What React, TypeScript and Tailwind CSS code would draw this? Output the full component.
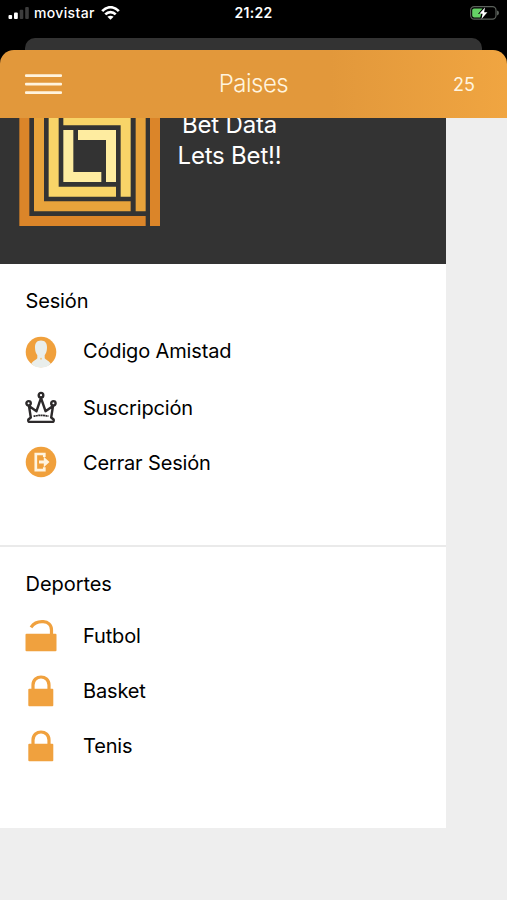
import type { ReactNode } from "react";

function Signal() {
  return (
    <svg className="block h-3 w-[22px]" viewBox="0 0 22 12">
      <rect x="0.5" y="8" width="3.6" height="4" rx="1" fill="#fff" />
      <rect x="6" y="5.5" width="3.8" height="6.5" rx="1" fill="#fff" />
      <rect x="11.7" y="2.7" width="3.6" height="9.3" rx="1" fill="#3c3c3c" />
      <rect x="17.2" y="0" width="3.6" height="12" rx="1" fill="#3c3c3c" />
    </svg>
  );
}

function Wifi() {
  return (
    <svg className="block h-[14px] w-[19px]" viewBox="0 0 19 14" fill="none" stroke="#fff" strokeWidth="2.7">
      <path d="M1.2 5.2C6-.1 13-.1 17.8 5.2" />
      <path d="M4.3 8.4c3-3.1 7.4-3.1 10.4 0" />
      <path d="M6.4 10.8q3.100-2.300 6.200 0l-3.100 3z" fill="#fff" stroke="none" />
    </svg>
  );
}

function Battery() {
  return (
    <svg className="block h-[14px] w-[30px]" viewBox="0 0 30 14">
      <rect x="1.6" y="0.6" width="25.4" height="12.6" rx="3.6" fill="none" stroke="#5b615b" strokeWidth="1.2" />
      <path d="M28 4.6q2 .5 2 2.400t-2 2.400z" fill="#5b615b" />
      <path d="M5 2.400h8.500L9 8h3.200l-1 3.400H5a1.800 1.800 0 0 1-1.800-1.800V4.200A1.800 1.800 0 0 1 5 2.400z" fill="#65d366" />
      <path d="M16 1.500 10.300 7.800h3.300l-1.100 5.100 5.900-6.600h-3.300z" fill="#fff" />
    </svg>
  );
}

function MenuBars() {
  return (
    <svg className="block h-5 w-[37px]" viewBox="0 0 37 20" fill="currentColor">
      <rect width="37" height="2.800" y="0.200" rx="1" />
      <rect width="37" height="2.800" y="8.700" rx="1" />
      <rect width="37" height="2.800" y="17.200" rx="1" />
    </svg>
  );
}

function Logo() {
  return (
    <svg className="block h-[112px] w-[170px] shrink-0" viewBox="0 24 510 336">
      <path d="M58 24h30v294h349v30H58zM450 24h30v324h-30z" fill="#db8529" />
      <path d="M102 24h30v250h260v30H102zM407 24h30v280h-30z" fill="#e8a33b" />
      <path d="M146 24h30v206h172v30H146zM190 24h202v236h-30V46H190z" fill="#f8d468" />
      <path d="M190 60h30v126h84v30H190zM234 60h114v156h-30V90h-84z" fill="#feeca0" />
    </svg>
  );
}

function Person() {
  return (
    <svg className="block size-8" viewBox="0 0 32 32">
      <circle cx="16" cy="16" r="15.300" fill="#f0a03c" />
      <path d="M16 4.600c4.200 0 6.200 2.800 6 7.200-.1 3.500-1 5.700-2.300 7.400v3c.9 1.500 3.700 2.200 6 5.200C23.500 30.400 20 31.400 16 31.400S8.500 30.400 6.300 27.400c2.300-3 5.100-3.700 6-5.200v-3C11 17.500 10.100 15.300 10 11.800c-.2-4.400 1.800-7.200 6-7.200z" fill="#e9eeec" />
      <circle cx="16" cy="22.700" r="1" fill="#efc98e" />
    </svg>
  );
}

function Crown() {
  return (
    <svg className="block size-8" viewBox="0 0 32 32" fill="none" stroke="#2d2a2b" strokeWidth="2.400" strokeLinejoin="round">
      <path d="M5.800 26.500 4 15l7.500 5.200L16 7l4.500 13.200L28 15l-1.800 11.500 2.400 2c.5 1.500-.2 2.500-1.500 2.500H4.900c-1.300 0-2-1-1.500-2.500z" fill="#fff" />
      <path d="M8.500 25.300q7.500-2 15 0" strokeWidth="1.700" strokeDasharray="2 .4" />
      <circle cx="3.600" cy="12.300" r="2.200" fill="#fff" />
      <circle cx="16" cy="4.200" r="2.300" fill="#fff" />
      <circle cx="28.400" cy="12.300" r="2.200" fill="#fff" />
    </svg>
  );
}

function Exit() {
  return (
    <svg className="block size-8" viewBox="0 0 32 32">
      <circle cx="16" cy="16" r="15.300" fill="#f0a03c" />
      <path d="M19.300 11V8H10.800v16.200h8.500v-3" fill="none" stroke="#fff4df" strokeWidth="2.700" />
      <path d="M14 14.500h4.800v-3.700l5.700 5.200-5.700 5.200v-3.700H14z" fill="#fff4df" />
    </svg>
  );
}

function Lock({ open = false }: { open?: boolean }) {
  return open ? (
    <svg className="block size-8" viewBox="0 0 32 32">
      <rect x="0.500" y="13.700" width="31" height="17.600" rx="1" fill="#f0a13e" />
      <path d="M6 7.300C11.500-.6 26.500-.6 26.500 10v5" fill="none" stroke="#f0a13e" strokeWidth="3.200" />
    </svg>
  ) : (
    <svg className="block size-8" viewBox="0 0 32 32">
      <rect x="3.300" y="13.700" width="25" height="17.600" rx="1" fill="#f0a13e" />
      <path d="M8 15V10C8-.7 24-.7 24 10v5" fill="none" stroke="#f0a13e" strokeWidth="3.200" />
    </svg>
  );
}

function Item({ icon, children }: { icon: ReactNode; children: ReactNode }) {
  return (
    <li className="flex h-8 items-center gap-[26px] pl-[25px] text-[20px] tracking-[-0.150px]">
      {icon}
      <span className="whitespace-nowrap">{children}</span>
    </li>
  );
}

export default function App() {
  return (
    <div className="flex h-[900px] w-[507px] flex-col overflow-hidden bg-black font-['Inter',sans-serif] text-black">
      <div className="grid h-[38px] shrink-0 grid-cols-3 px-2 text-[14px] font-medium leading-[26px] text-white">
        <div className="flex h-[26px] items-center">
          <Signal />
          <span className="ml-1 tracking-[0.350px]">movistar</span>
          <span className="ml-1.5"><Wifi /></span>
        </div>
        <time className="text-center font-semibold tracking-[0.300px]">21:22</time>
        <div className="flex h-[26px] items-center justify-end"><Battery /></div>
      </div>
      <div className="mx-[25px] h-3 shrink-0 rounded-t-[10px] bg-[#333]" />
      <header className="grid h-[68px] shrink-0 grid-cols-3 items-center rounded-t-[14px] bg-linear-to-r from-[#e2983b] from-65% to-[#f0a541] px-[25px] text-[#fff4df]">
        <button aria-label="Menu">
          <MenuBars />
        </button>
        <h1 className="text-center text-[24px] font-light tracking-[-0.500px]">Paises</h1>
        <span className="pr-[7px] text-right text-[18px]">25</span>
      </header>
      <main className="flex-1 bg-[#eee]">
        <aside className="w-[446px] bg-white">
          <div className="flex h-[146px] overflow-hidden bg-[#333]">
            <Logo />
            <div className="-mt-[9px] ml-[7px] h-fit w-[105px] text-center text-[24px] leading-[31px] tracking-[-0.200px] whitespace-nowrap text-white">
              <p>Bet Data</p>
              <p>Lets Bet!!</p>
            </div>
          </div>
          <section className="h-[281px] pt-[22px]">
            <h2 className="pl-[25.500px] text-[20px] leading-[30px] tracking-[-0.150px]">Sesión</h2>
            <ul className="mt-5 flex flex-col gap-[23px]">
              <Item icon={<Person />}>
                <span className="block pb-[3px]">Código Amistad</span>
              </Item>
              <Item icon={<Crown />}>
                <span className="block pt-[2px]">Suscripción</span>
              </Item>
              <Item icon={<Exit />}>
                <span className="block pt-[2px]">Cerrar Sesión</span>
              </Item>
            </ul>
          </section>
          <section className="h-[283px] border-t-2 border-[#eaeaea] pt-[22px]">
            <h2 className="pl-[25.500px] text-[20px] leading-[30px] tracking-[-0.050px]">Deportes</h2>
            <ul className="mt-[21px] flex flex-col gap-[23px]">
              <Item icon={<Lock open />}>Futbol</Item>
              <Item icon={<Lock />}>Basket</Item>
              <Item icon={<Lock />}>Tenis</Item>
            </ul>
          </section>
        </aside>
      </main>
    </div>
  );
}
